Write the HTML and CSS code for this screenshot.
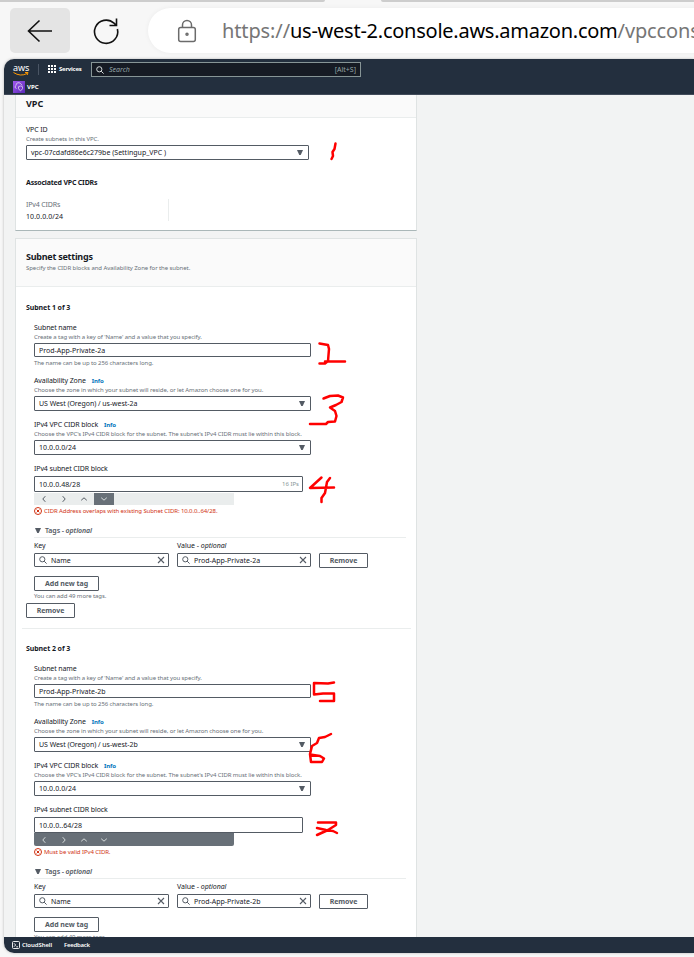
FILE: index.html
```html
<!DOCTYPE html>
<html lang="en">
<head>
<meta charset="utf-8">
<title>Create subnet</title>
<link rel="stylesheet" href="styles.css">
</head>
<body>
<svg class="defs" width="0" height="0">
  <symbol id="search" viewBox="0 0 8 8"><circle cx="3.3" cy="3.3" r="2.6"/><path d="M5.2 5.2 7.6 7.6"/></symbol>
  <symbol id="close" viewBox="0 0 8 8"><path d="M1 1 7 7M7 1 1 7"/></symbol>
  <symbol id="left" viewBox="0 0 8 8"><path d="M5.3 1.2 2.8 4 5.3 6.8"/></symbol>
  <symbol id="right" viewBox="0 0 8 8"><path d="M2.7 1.2 5.2 4 2.7 6.8"/></symbol>
  <symbol id="up" viewBox="0 0 8 8"><path d="M1.2 5.3 4 2.8 6.8 5.3"/></symbol>
  <symbol id="down" viewBox="0 0 8 8"><path d="M1.2 2.7 4 5.2 6.8 2.7"/></symbol>
  <symbol id="error" viewBox="0 0 8 8"><circle cx="4" cy="4" r="3.5"/><path d="M2.6 2.6 5.4 5.4M5.4 2.6 2.6 5.4"/></symbol>
</svg>

<div class="toolbar">
  <div class="tabs"><span class="tab tab-left"></span><span class="tab tab-right"></span></div>
  <div class="nav">
    <div class="back"><svg width="26" height="24" viewBox="0 0 26 24"><path d="M1.5 12H25M12.5 1.500 1.500 12 12.500 22.500"/></svg></div>
    <svg class="reload" width="28" height="28" viewBox="0 0 28 28"><path d="M25.400 12A11.600 11.600 0 1 1 22 6.200L24.500 8.500M24.500 1.500V8.500H17.500"/></svg>
    <div class="address">
      <svg class="lock" width="20" height="24" viewBox="0 0 20 24"><rect x="1.700" y="8.500" width="16.600" height="14" rx="2"/><path d="M5.500 8.500V6a4.500 4.500 0 0 1 9 0v2.500"/><circle cx="10" cy="15.300" r="1"/></svg>
      <span class="url">https://<b>us-west-2.console.aws.amazon.com</b>/vpccons</span>
    </div>
  </div>
</div>

<div class="page">
  <header class="top">
    <div class="bar">
      <div class="aws"><span class="aws-name">aws</span><svg width="16" height="4" viewBox="0 0 16 4"><path d="M.5.5Q7.500 5 14 1.500M12 .5h3l-.8 2.500"/></svg></div>
      <i class="sep"></i>
      <svg class="grid" width="9" height="9" viewBox="0 0 9 9"><path d="M0 0h2v2H0zM3 0h2v2H3zM6 0h2v2H6zM0 3h2v2H0zM3 3h2v2H3zM6 3h2v2H6zM0 6h2v2H0zM3 6h2v2H3zM6 6h2v2H6z"/></svg>
      <span class="services">Services</span>
      <div class="search"><svg class="ic"><use href="#search"/></svg><span class="ph">Search</span><span class="key">[Alt+S]</span></div>
    </div>
    <div class="fav"><span class="vpc-ic"><svg width="12" height="12" viewBox="0 0 12 12"><path d="M3.500 7.500A1.600 1.600 0 0 1 3 4.500 2.600 2.600 0 0 1 8 3.300L9.300 4.300M5.500 5.700 7.500 5 9.500 5.700V7.500Q9 9 7.500 9.700 6 9 5.500 7.500z"/></svg></span><span class="vpc-name">VPC</span></div>
  </header>

  <main class="content">
    <section class="card card-vpc">
      <div class="head head-vpc"><h2>VPC</h2></div>
      <div class="body">
        <div class="label"><span>VPC ID</span></div>
        <div class="hint">Create subnets in this VPC.</div>
        <div class="box select vpc-select"><span>vpc-07cdafd86e6c279be (Settingup_VPC )</span><i class="caret"></i></div>
        <h3 class="assoc">Associated VPC CIDRs</h3>
        <div class="cidrs"><div class="gray">IPv4 CIDRs</div><div class="ip">10.0.0.0/24</div></div>
      </div>
    </section>

    <section class="card card-subnets">
      <div class="head head-sub"><h2 class="wide">Subnet settings</h2><div class="hint">Specify the CIDR blocks and Availability Zone for the subnet.</div></div>

      <article class="subnet">
        <h3>Subnet 1 of 3</h3>
        <div class="fields">
          <div class="label"><span>Subnet name</span></div>
          <div class="hint">Create a tag with a key of 'Name' and a value that you specify.</div>
          <div class="box name"><span>Prod-App-Private-2a</span></div>
          <div class="hint after">The name can be up to 256 characters long.</div>
          <div class="label az"><span>Availability Zone</span><a>Info</a></div>
          <div class="hint">Choose the zone in which your subnet will reside, or let Amazon choose one for you.</div>
          <div class="box select"><span class="region">US West (Oregon) / us-west-2a</span><i class="caret"></i></div>
          <div class="label next"><span>IPv4 VPC CIDR block</span><a>Info</a></div>
          <div class="hint">Choose the VPC's IPv4 CIDR block for the subnet. The subnet's IPv4 CIDR must lie within this block.</div>
          <div class="box select"><span class="ip">10.0.0.0/24</span><i class="caret"></i></div>
          <div class="label next"><span>IPv4 subnet CIDR block</span></div>
          <div class="box cidr"><span class="ip">10.0.0.48/28</span><span class="ips">16 IPs</span></div>
          <div class="steps"><span><svg class="ic"><use href="#left"/></svg></span><span><svg class="ic"><use href="#right"/></svg></span><span><svg class="ic"><use href="#up"/></svg></span><span class="on"><svg class="ic"><use href="#down"/></svg></span></div>
          <div class="error"><svg class="ic"><use href="#error"/></svg><span>CIDR Address overlaps with existing Subnet CIDR: 10.0.0..64/28.</span></div>
          <div class="tags"><i class="caret"></i><span>Tags - <em>optional</em></span></div>
          <div class="tag-grid">
            <div><div class="label"><span>Key</span></div><div class="box token"><svg class="ic"><use href="#search"/></svg><span>Name</span><svg class="ic x"><use href="#close"/></svg></div></div>
            <div><div class="label value"><span>Value - <em>optional</em></span></div><div class="box token"><svg class="ic"><use href="#search"/></svg><span>Prod-App-Private-2a</span><svg class="ic x"><use href="#close"/></svg></div></div>
            <button class="btn rm">Remove</button>
          </div>
          <button class="btn add">Add new tag</button>
          <div class="hint more">You can add 49 more tags.</div>
        </div>
        <button class="btn rm">Remove</button>
      </article>
      <hr>
      <article class="subnet second">
        <h3>Subnet 2 of 3</h3>
        <div class="fields">
          <div class="label"><span>Subnet name</span></div>
          <div class="hint">Create a tag with a key of 'Name' and a value that you specify.</div>
          <div class="box name"><span>Prod-App-Private-2b</span></div>
          <div class="hint after">The name can be up to 256 characters long.</div>
          <div class="label az"><span>Availability Zone</span><a>Info</a></div>
          <div class="hint">Choose the zone in which your subnet will reside, or let Amazon choose one for you.</div>
          <div class="box select"><span class="region">US West (Oregon) / us-west-2b</span><i class="caret"></i></div>
          <div class="label next"><span>IPv4 VPC CIDR block</span><a>Info</a></div>
          <div class="hint">Choose the VPC's IPv4 CIDR block for the subnet. The subnet's IPv4 CIDR must lie within this block.</div>
          <div class="box select"><span class="ip">10.0.0.0/24</span><i class="caret"></i></div>
          <div class="label next"><span>IPv4 subnet CIDR block</span></div>
          <div class="box cidr"><span class="ip">10.0.0..64/28</span></div>
          <div class="steps dark"><span><svg class="ic"><use href="#left"/></svg></span><span><svg class="ic"><use href="#right"/></svg></span><span><svg class="ic"><use href="#up"/></svg></span><span><svg class="ic"><use href="#down"/></svg></span></div>
          <div class="error"><svg class="ic"><use href="#error"/></svg><span>Must be valid IPv4 CIDR.</span></div>
          <div class="tags"><i class="caret"></i><span>Tags - <em>optional</em></span></div>
          <div class="tag-grid">
            <div><div class="label"><span>Key</span></div><div class="box token"><svg class="ic"><use href="#search"/></svg><span>Name</span><svg class="ic x"><use href="#close"/></svg></div></div>
            <div><div class="label value"><span>Value - <em>optional</em></span></div><div class="box token"><svg class="ic"><use href="#search"/></svg><span>Prod-App-Private-2b</span><svg class="ic x"><use href="#close"/></svg></div></div>
            <button class="btn rm">Remove</button>
          </div>
          <button class="btn add">Add new tag</button>
          <div class="hint more">You can add 49 more tags.</div>
        </div>
      </article>
    </section>
  </main>

  <footer class="foot"><svg width="8" height="8" viewBox="0 0 8 8"><rect x=".5" y=".5" width="7" height="7" rx="1"/><path d="M2 2.300 3.700 4 2 5.700M4.300 5.800H6"/></svg><span class="cs">CloudShell</span><span class="fb">Feedback</span></footer>
</div>

<svg class="ink" width="694" height="957" viewBox="0 0 694 957">
  <path d="M335.500 143.500 334.500 149 332.500 152 333 156 331.500 159"/>
  <path d="M319.500 343.500 328 345 329 349 328 361 325 363.500H319.500M325 361.500H345"/>
  <path d="M323.500 398.500 330 396 338 395.500 343 397.500 341.500 402 336 405 330 407.500 335 411 336.500 416 335 421.500 328 422 326 424H310"/>
  <path d="M321.500 477.500 310 488 334 487.500M330 478 327 482 325 493 321.500 498V502"/>
  <path d="M334 682.500 328 683.500 314 683V694.500L323 693.500H334V701H320"/>
  <path d="M331 734 325 737 319 738 317 743 312 746 310 754 311 762H322L324 758.500 320 756 310 754.500"/>
  <path d="M318 822.500H336V825L328 830 317 835M317 828 326 830 333 831 337 833"/>
</svg>
</body>
</html>
```
FILE: styles.css
```css
* { box-sizing: border-box; }
body { margin: 0; width: 694px; height: 957px; overflow: hidden; position: relative; background: #f7f7f7; font: 7px/11px "Noto Sans", sans-serif; color: #16191f; }
.defs { position: absolute; }
h2, h3, hr, p { margin: 0; }
svg { display: block; flex: none; fill: none; }
.ic { width: 8px; height: 8px; stroke: #545b64; stroke-width: 1; }

.toolbar { height: 59px; overflow: hidden; }
.tabs { display: flex; height: 8px; justify-content: space-between; }
.tab { height: 2px; background: #cdcdcd; }
.tab-left { width: 325px; border-bottom-right-radius: 3px; }
.tab-right { width: 313px; border-bottom-left-radius: 3px; }
.nav { display: flex; align-items: center; height: 45px; padding-left: 10px; }
.back { flex: none; width: 60px; height: 45px; border-radius: 5px; background: #e4e4e4; display: flex; align-items: center; justify-content: center; }
.back svg, .reload { stroke: #111; stroke-width: 1.6; }
.reload { margin-left: 22px; }
.address { margin-left: 28px; width: 600px; flex: none; height: 45px; border-radius: 23px; background: #fff; display: flex; align-items: center; padding-left: 29px; box-shadow: 0 0 5px #0000000d; }
.lock { stroke: #6b6b6b; stroke-width: 1.5; }
.url { margin-left: 25px; font-size: 20px; line-height: 30px; letter-spacing: -.12px; white-space: nowrap; color: #767676; }
.url b { font-weight: 400; color: #000; letter-spacing: -.25px; }

.page { margin-left: 4px; width: 690px; height: 894px; border-radius: 10px 0 0 10px; overflow: hidden; background: #f2f3f3; display: flex; flex-direction: column; box-shadow: 0 0 3px #0004; }
.top { height: 36px; flex: none; background: #232f3e; border-bottom: 1px solid #414b5a; color: #fff; }
.bar { height: 21px; display: flex; align-items: center; }
.aws { width: 16px; margin-left: 9px; }
.aws-name { display: block; font-size: 9px; line-height: 8px; }
.aws svg { stroke: #f90; stroke-width: 1; }
.sep { width: 1px; height: 11px; background: #4a5564; margin-left: 9px; }
.grid { margin-left: 9px; fill: #fff; }
.services { margin-left: 2px; width: 23px; font-size: 6px; font-weight: 700; letter-spacing: -.25px; }
.search { margin-left: 9px; width: 270px; height: 15px; background: #161b24; border: 1px solid #879596; display: flex; align-items: center; padding: 0 4px; color: #95a5a6; }
.search .ic { stroke: #d5dbdb; }
.ph { margin-left: 5px; font-style: italic; }
.key { margin-left: auto; font-size: 7px; }
.fav { height: 14px; display: flex; align-items: center; padding-left: 9px; }
.vpc-ic { width: 12px; height: 12px; background: linear-gradient(135deg, #a259ee, #5a28b8); }
.vpc-ic svg { stroke: #eee; stroke-width: .7; }
.vpc-name { margin-left: 2px; font-size: 6px; font-weight: 700; }

.content { flex: 1; min-height: 0; overflow: hidden; padding-left: 11px; }
.card { width: 402px; background: #fff; border: 1px solid #dfe3e3; }
.card-vpc { height: 136px; border-top: 0; border-bottom-color: #aab7b8; }
.card-subnets { margin-top: 7px; }
.head { background: #fafafa; border-bottom: 1px solid #eaeded; padding-left: 10px; }
.head-vpc { height: 23px; padding-top: 2px; }
.head-sub { height: 48px; padding-top: 11px; }
.head-sub .hint { margin-top: 1px; letter-spacing: -.075px; }
h2 { font-size: 9px; line-height: 13px; font-weight: 700; }
.wide { letter-spacing: -.25px; }
h3 { font-size: 7px; line-height: 13px; font-weight: 700; letter-spacing: -.07px; }
.body { padding: 6px 10px 0; }
.label { height: 11px; white-space: nowrap; letter-spacing: -.11px; }
.value { letter-spacing: -.03px; }
.label a { margin-left: 6px; font-size: 6px; font-weight: 700; color: #0073bb; }
.hint { height: 9px; line-height: 9px; font-size: 6px; letter-spacing: -.092px; color: #687078; white-space: nowrap; }
.box { border: 1px solid #545b64; border-radius: 1px; display: flex; align-items: center; padding: 0 4px; width: 277px; height: 15px; margin-top: 1px; white-space: nowrap; }
.ip { letter-spacing: .08px; }
.region { letter-spacing: -.05px; }
.caret { width: 6px; height: 5px; background: #545b64; clip-path: polygon(0 0, 100% 0, 62% 100%, 38% 100%); flex: none; }
.select .caret { margin-left: auto; margin-right: 1px; }
.vpc-select { width: 283px; }
.assoc { margin-top: 16px; letter-spacing: -.2px; }
.cidrs { margin-top: 10px; width: 143px; height: 22px; border-right: 1px solid #eaeded; }
.gray { color: #687078; letter-spacing: -.15px; }
.cidrs .gray { height: 12px; line-height: 12px; }

.subnet { padding: 14px 0 0 10px; }
.subnet.second { padding-top: 13px; }
.fields { padding-left: 8px; margin-top: 8px; }
.name { height: 14px; }
.after { margin-top: 2px; }
.az { margin-top: 7px; }
.next { margin-top: 8px; }
.cidr { width: 269px; height: 16px; margin-top: 2px; }
.ips { margin-left: auto; margin-right: -1px; font-size: 6px; color: #879596; }
.steps { display: flex; width: 200px; height: 12px; margin-top: 1px; background: #eaeded; }
.steps.dark { margin-top: 0; height: 13px; border-radius: 0 0 2px 2px; }
.steps span { width: 20px; display: flex; align-items: center; justify-content: center; }
.steps .on, .dark { background: #687078; }
.steps .on .ic, .dark .ic { stroke: #d5dbdb; }
.error { height: 12px; display: flex; align-items: center; gap: 2px; font-size: 6px; letter-spacing: -.085px; color: #d13212; white-space: nowrap; }
.error .ic { stroke: #d13212; }
.tags { margin-top: 7px; margin-right: 10px; height: 14px; border-bottom: 1px solid #eaeded; display: flex; align-items: center; gap: 4px; padding-left: 1px; color: #545b64; font-weight: 600; letter-spacing: -.09px; }
.tag-grid { display: flex; gap: 8px; margin-top: 2px; align-items: flex-start; }
.token { width: 135px; height: 14px; margin-top: 2px; }
.tag-grid > div + div .token { width: 134px; }
.token span { margin-left: 4px; }
.token .x { margin-left: auto; margin-right: -1px; stroke-width: 1.100; }
.btn { display: flex; align-items: center; justify-content: center; height: 15px; padding: 0; border: 1px solid #545b64; border-radius: 1px; background: #fff; color: #545b64; font: 700 7px/11px "Noto Sans", sans-serif; letter-spacing: -.05px; }
.btn.rm { width: 49px; }
.tag-grid .rm { margin-top: 13px; }
.add { width: 65px; margin-top: 8px; }
.more { margin-top: 1px; }
.subnet > .rm { margin-top: 2px; }
hr { border: 0; height: 1px; background: #eaeded; margin: 10px 5px 0 6px; }

.foot { height: 16px; flex: none; background: #232f3e; color: #fff; display: flex; align-items: center; padding-left: 8px; font-size: 6px; font-weight: 600; }
.foot svg { stroke: #fff; stroke-width: .9; margin-right: 2px; }
.cs { width: 30px; letter-spacing: -.08px; }
.fb { margin-left: 12px; letter-spacing: -.25px; }
.ink { position: absolute; left: 0; top: 0; stroke: #f00; stroke-width: 2.500; stroke-linecap: round; stroke-linejoin: round; pointer-events: none; }
```
